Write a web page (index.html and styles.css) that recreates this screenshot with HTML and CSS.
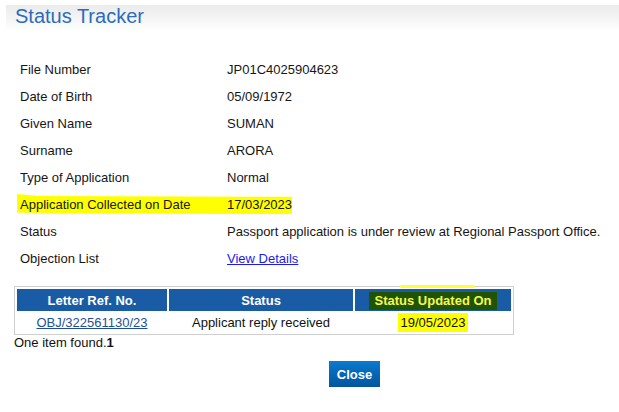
FILE: index.html
```html
<!DOCTYPE html>
<html>
<head>
<meta charset="utf-8">
<title>Status Tracker</title>
<link rel="stylesheet" href="styles.css">
</head>
<body>
<div class="page">
  <div class="titlebar"><h1 class="title">Status Tracker</h1></div>

  <div class="details">
    <div class="row"><div class="label">File Number</div><div class="value">JP01C4025904623</div></div>
    <div class="row"><div class="label">Date of Birth</div><div class="value">05/09/1972</div></div>
    <div class="row"><div class="label">Given Name</div><div class="value">SUMAN</div></div>
    <div class="row"><div class="label">Surname</div><div class="value">ARORA</div></div>
    <div class="row"><div class="label">Type of Application</div><div class="value">Normal</div></div>
    <div class="row marked"><div class="label">Application Collected on Date</div><div class="value">17/03/2023</div></div>
    <div class="row"><div class="label">Status</div><div class="value">Passport application is under review at Regional Passport Office.</div></div>
    <div class="row"><div class="label">Objection List</div><div class="value"><a class="link" href="#">View Details</a></div></div>
  </div>

  <table class="grid">
    <thead>
      <tr>
        <th class="c1">Letter Ref. No.</th>
        <th class="c2">Status</th>
        <th class="c3"><span class="mark-dark">Status Updated On</span></th>
      </tr>
    </thead>
    <tbody>
      <tr>
        <td><a class="ref" href="#">OBJ/322561130/23</a></td>
        <td>Applicant reply received</td>
        <td><span class="mark">19/05/2023</span></td>
      </tr>
    </tbody>
  </table>
  <div class="found">One item found.<b>1</b></div>

  <div class="actions"><button class="btn">Close</button></div>
</div>
</body>
</html>
```
FILE: styles.css
```css
html, body {
  margin: 0;
  padding: 0;
  background: #fff;
}
body {
  font-family: "Liberation Sans", Arial, sans-serif;
  font-size: 13px;
  color: #161616;
}
.page {
  padding-top: 5px;
}
.titlebar {
  margin-left: 6px;
  height: 26px;
  background: linear-gradient(to bottom, #ebebeb 0%, #f4f4f4 50%, #ffffff 100%);
  padding-left: 9px;
}
.title {
  margin: 0;
  font-weight: normal;
  font-size: 20px;
  line-height: 22px;
  color: #2c6bbd;
}
.details {
  margin-top: 25px;
  margin-left: 20px;
}
.row {
  display: grid;
  grid-template-columns: 207px auto;
  line-height: 27px;
  height: 27px;
  position: relative;
}
.row > div {
  position: relative;
  z-index: 1;
}
.row.marked::before {
  content: "";
  position: absolute;
  left: -3px;
  top: 3px;
  width: 275px;
  height: 20px;
  background: #ffff00;
  clip-path: polygon(0 0, 8% 10%, 60% 12%, 100% 14%, 100% 100%, 40% 98%, 3% 94%, 0 92%);
  z-index: 0;
}
.link {
  color: #1a1aee;
  text-decoration: underline;
}
.grid {
  margin-top: 14px;
  margin-left: 14px;
  width: 500px;
  border: 1px solid #cfcfcf;
  border-collapse: separate;
  border-spacing: 2px;
}
.grid th {
  background: #195ca5;
  color: #fff;
  font-weight: bold;
  height: 22px;
  padding: 0;
  text-align: center;
  position: relative;
}
.grid th.c1 { width: 150px; }
.grid th.c2 { width: 184px; }
.grid td {
  height: 19px;
  padding: 0;
  text-align: center;
  color: #111;
}
.mark-dark {
  background: #1f5404;
  color: #f8f850;
  padding: 1px 5px 2px;
}
.grid th.c3::before {
  content: "";
  position: absolute;
  left: 45px;
  top: -4px;
  width: 75px;
  height: 3px;
  background: #ffff33;
  border-radius: 2px;
}
.mark {
  background: #ffff00;
  padding: 2px 2px;
}
.ref {
  color: #1f4f99;
  text-decoration: underline;
}
.found {
  margin-left: 14px;
  color: #111;
}
.actions {
  margin-top: 11px;
  padding-left: 329px;
}
.btn {
  font-family: "Liberation Sans", Arial, sans-serif;
  font-size: 13px;
  font-weight: bold;
  color: #fff;
  border: none;
  height: 26px;
  width: 51px;
  padding: 0;
  background: linear-gradient(to bottom, #0b7bcf 0%, #0566b5 50%, #04569d 100%);
}
```
